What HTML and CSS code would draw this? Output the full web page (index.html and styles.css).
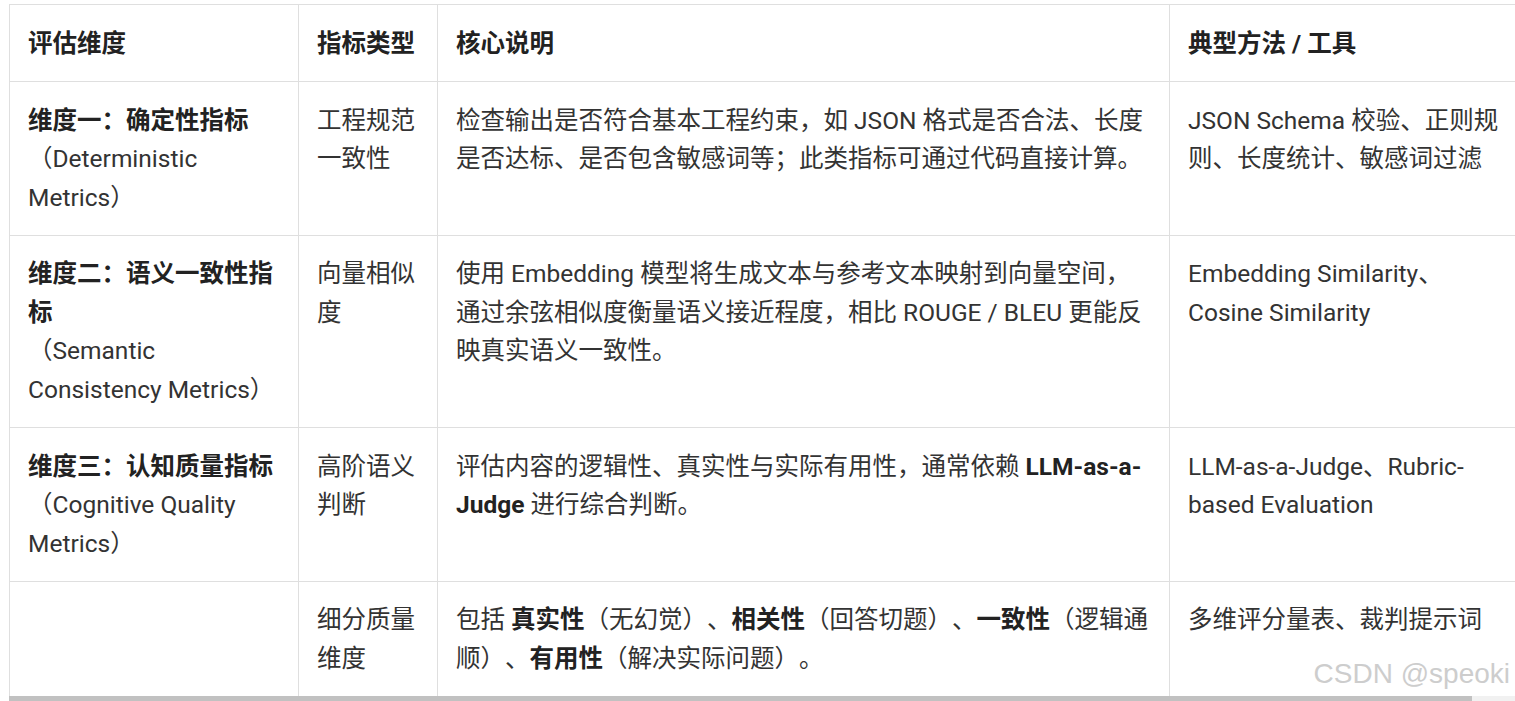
FILE: index.html
```html
<!DOCTYPE html>
<html lang="zh-CN">
<head>
<meta charset="utf-8">
<title>评估维度</title>
<link rel="stylesheet" href="styles.css">
</head>
<body>
<div class="page">
  <div class="scroller">
    <table class="grid">
      <colgroup>
        <col class="c1"><col class="c2"><col class="c3"><col class="c4">
      </colgroup>
      <thead>
        <tr>
          <th>评估维度</th>
          <th>指标类型</th>
          <th>核心说明</th>
          <th>典型方法 / 工具</th>
        </tr>
      </thead>
      <tbody>
        <tr>
          <td><strong>维度一：确定性指标</strong><br>（Deterministic Metrics）</td>
          <td>工程规范一致性</td>
          <td>检查输出是否符合基本工程约束，如 JSON 格式是否合法、长度是否达标、是否包含敏感词等；此类指标可通过代码直接计算。</td>
          <td>JSON Schema 校验、正则规则、长度统计、敏感词过滤</td>
        </tr>
        <tr>
          <td><strong>维度二：语义一致性指标</strong><br>（Semantic Consistency Metrics）</td>
          <td>向量相似度</td>
          <td>使用 Embedding 模型将生成文本与参考文本映射到向量空间，通过余弦相似度衡量语义接近程度，相比 ROUGE / BLEU 更能反映真实语义一致性。</td>
          <td>Embedding Similarity、Cosine Similarity</td>
        </tr>
        <tr>
          <td><strong>维度三：认知质量指标</strong><br>（Cognitive Quality Metrics）</td>
          <td>高阶语义判断</td>
          <td>评估内容的逻辑性、真实性与实际有用性，通常依赖 <strong>LLM-as-a-Judge</strong> 进行综合判断。</td>
          <td>LLM-as-a-Judge、Rubric-based Evaluation</td>
        </tr>
        <tr>
          <td></td>
          <td>细分质量维度</td>
          <td>包括 <strong>真实性</strong>（无幻觉）、<strong>相关性</strong>（回答切题）、<strong>一致性</strong>（逻辑通顺）、<strong>有用性</strong>（解决实际问题）。</td>
          <td>多维评分量表、裁判提示词</td>
        </tr>
      </tbody>
    </table>
  </div>
  <div class="hbar"><div class="thumb"></div></div>
  <div class="watermark">CSDN @speoki</div>
</div>
</body>
</html>
```

FILE: styles.css
```css
html, body {
  margin: 0;
  padding: 0;
  background: #ffffff;
}

.page {
  position: relative;
  width: 1515px;
  height: 701px;
  overflow: hidden;
  padding-top: 4px;
  box-sizing: border-box;
}

.scroller {
  margin-left: 9px;
  width: 1506px;
  height: 692px;
  overflow: hidden;
}

.grid {
  border-collapse: collapse;
  table-layout: fixed;
  width: 1518px;
  font-family: Roboto, "Noto Sans CJK SC", sans-serif;
  font-size: 24.5px;
  line-height: 38.5px;
  color: #333333;
  text-spacing-trim: space-all;
  font-feature-settings: "halt" 0, "chws" 0;
}

.c1 { width: 289px; }
.c2 { width: 139px; }
.c3 { width: 732px; }
.c4 { width: 358px; }

.grid th,
.grid td {
  border: 1px solid #dfdfdf;
  padding: 19.75px 18px 17.5px 18px;
  text-align: left;
  vertical-align: top;
  word-break: normal;
  overflow-wrap: break-word;
}

.grid th {
  font-weight: 700;
  color: #222222;
}

.grid strong {
  font-weight: 700;
  color: #222222;
}

.hbar {
  margin-left: 9px;
  height: 5px;
  background: #f1f1f1;
}

.thumb {
  width: 1463px;
  height: 5px;
  background: #c1c1c1;
}

.watermark {
  position: absolute;
  right: 5px;
  top: 656px;
  font-family: "Liberation Sans", Arial, sans-serif;
  font-size: 28px;
  line-height: 36px;
  color: #cdcdcd;
  text-shadow: 0 0 1px #ffffff;
}
```
